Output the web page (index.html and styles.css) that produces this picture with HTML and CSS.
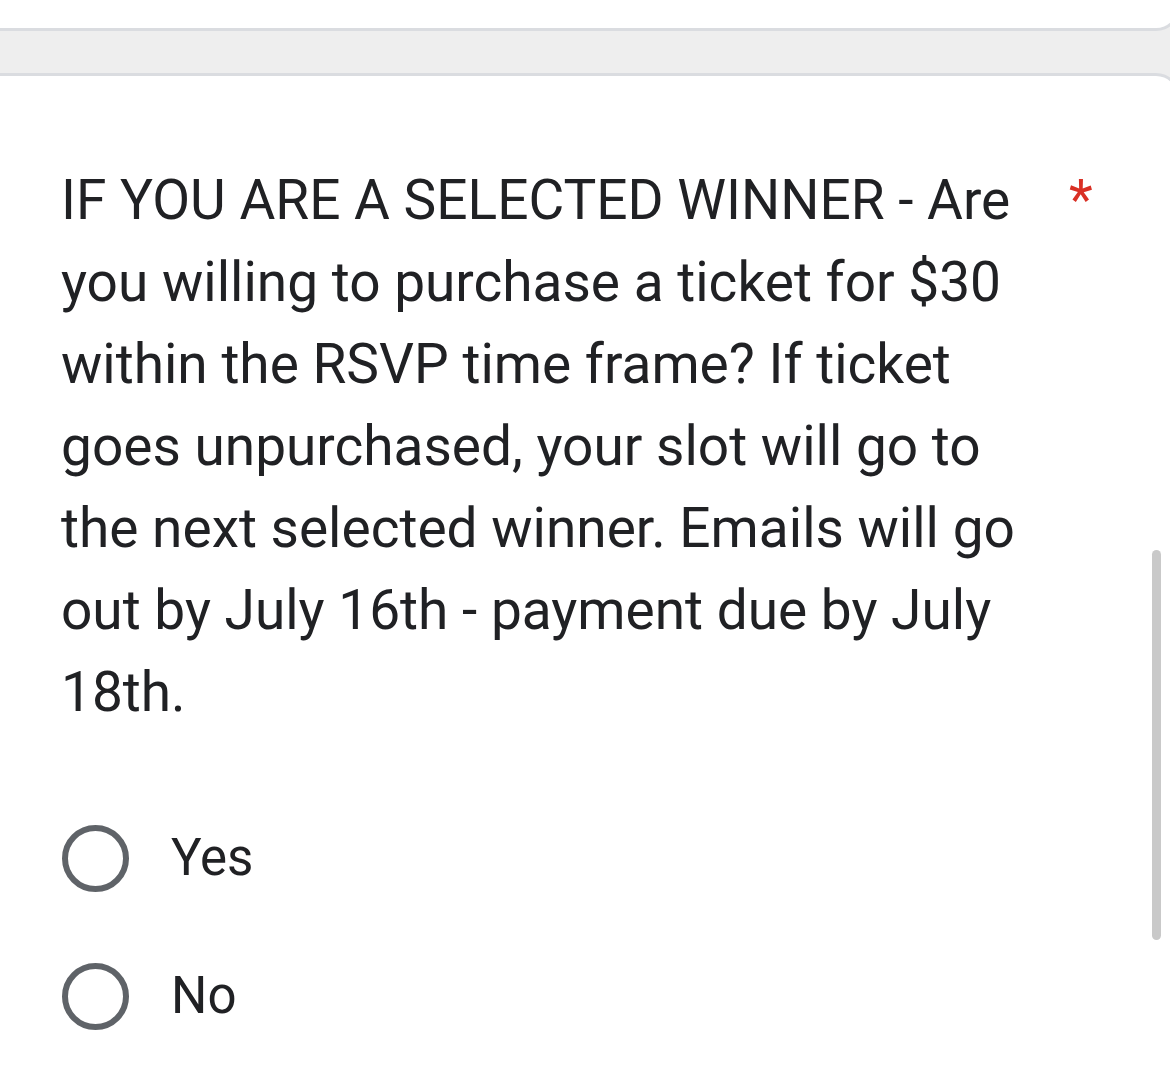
FILE: index.html
```html
<!DOCTYPE html>
<html>
<head>
    <title>Question</title>
    <link rel="stylesheet" href="styles.css">
</head>
<body>
    <div class="card card-prev"></div>

    <div class="card card-question">
        <div class="question-title">
            <span class="question-text">IF YOU ARE A SELECTED WINNER - Are you willing to purchase a ticket for $30 within the RSVP time frame? If ticket goes unpurchased, your slot will go to the next selected winner. Emails will go out by July 16th - payment due by July 18th.</span>
            <span class="required">*</span>
        </div>

        <div class="options">
            <label class="option">
                <span class="radio"></span>
                <span class="option-label">Yes</span>
            </label>
            <label class="option">
                <span class="radio"></span>
                <span class="option-label">No</span>
            </label>
        </div>
    </div>

    <div class="scrollbar"></div>
</body>
</html>
```

FILE: styles.css
```css
html,
body {
    margin: 0;
    padding: 0;
    overflow: hidden;
}

body {
    background-color: #eeeeee;
    font-family: Roboto, "Noto Sans", sans-serif;
    color: #202124;
    height: 1082px;
    position: relative;
}

.card {
    background-color: #fff;
    border: 3px solid #dadce0;
    width: calc(100% + 50px);
    margin-left: -40px;
    box-sizing: border-box;
}

.card-prev {
    height: 31px;
    border-top: none;
    border-radius: 0 0 24px 0;
    margin-bottom: 42px;
}

.card-question {
    border-bottom: none;
    border-radius: 0 24px 0 0;
    padding: 83px 0 0 98px;
    height: 1009px;
}

.question-title {
    display: flex;
    align-items: flex-start;
}

.question-text {
    width: 964px;
    font-size: 55px;
    line-height: 82px;
}

.required {
    color: #d93025;
    font-size: 55px;
    line-height: 82px;
    margin-left: 44px;
}

.options {
    display: flex;
    flex-direction: column;
    gap: 72px;
    margin-top: 92px;
}

.option {
    display: flex;
    align-items: center;
    height: 66px;
}

.radio {
    width: 55px;
    height: 55px;
    border: 6px solid #5f6368;
    border-radius: 50%;
    flex-shrink: 0;
    margin-left: 1px;
}

.option-label {
    font-size: 51px;
    line-height: 66px;
    margin-left: 42px;
}

.scrollbar {
    position: absolute;
    right: 9px;
    top: 550px;
    width: 9px;
    height: 390px;
    border-radius: 5px;
    background-color: #c9c9c9;
}
```
